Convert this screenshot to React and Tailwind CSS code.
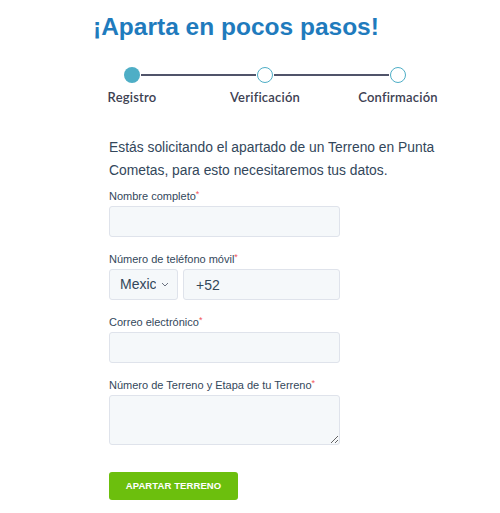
import React from "react";

const steps = ["Registro", "Verificación", "Confirmación"];

function Field({ label, children }) {
  return (
    <div className="mb-[15px]">
      <label className="block text-[11px] leading-[14px] text-[#33475b] mb-[3px]">
        {label}
        <span className="text-[#f2545b] text-[9px] align-top leading-[10px]">*</span>
      </label>
      {children}
    </div>
  );
}

const boxCls =
  "block h-[31px] rounded-[3px] border border-[#dfe3eb] bg-[#f5f8fa] text-[14px] text-[#33475b] outline-none";

export default function App() {
  return (
    <div
      className="w-[500px] h-[513px] bg-white overflow-hidden"
      style={{ fontFamily: '"Liberation Sans", Arial, sans-serif' }}
    >
      <div className="pl-[93px] pt-[12px]">
        <h1 className="text-[24.5px] leading-[30px] font-bold text-[#1f7bbd]">
          ¡Aparta en pocos pasos!
        </h1>

        {/* stepper */}
        <div className="mt-[25px] w-[282px] ml-[31px]">
          <div className="flex items-center">
            <span className="w-[16px] h-[16px] rounded-full bg-[#4eaec6] shrink-0" />
            <span className="flex-1 h-[2px] bg-[#50546a] mx-[1px]" />
            <span className="w-[16px] h-[16px] rounded-full border-[1.5px] border-[#4eaec6] bg-white shrink-0" />
            <span className="flex-1 h-[2px] bg-[#50546a] mx-[1px]" />
            <span className="w-[16px] h-[16px] rounded-full border-[1.5px] border-[#4eaec6] bg-white shrink-0" />
          </div>
          <div
            className="flex justify-between mt-[6px] text-[13px] leading-[16px] font-semibold text-[#3d4152] tracking-[0.2px]"
            style={{ fontFamily: "Lato, sans-serif" }}
          >
            {steps.map((s) => (
              <div key={s} className="w-[16px] flex justify-center whitespace-nowrap">
                {s}
              </div>
            ))}
          </div>
        </div>
      </div>

      <div className="pl-[109px] pt-[31px]">
        <p className="text-[13.85px] leading-[23px] text-[#33475b] w-[345px] mb-[7px]">
          Estás solicitando el apartado de un Terreno en Punta Cometas, para esto necesitaremos tus datos.
        </p>

        <Field label="Nombre completo">
          <input className={`${boxCls} w-[231px] px-[10px]`} />
        </Field>

        <Field label="Número de teléfono móvil">
          <div className="flex gap-[5px]">
            <div className={`${boxCls} w-[69px] flex items-center pl-[10px] pr-[5px]`}>
              <span className="w-[36px] overflow-hidden whitespace-nowrap">Mexico</span>
              <svg width="8" height="5" viewBox="0 0 8 5" className="ml-auto mr-[3px]">
                <path d="M1 1l3 3 3-3" fill="none" stroke="#6b7280" strokeWidth="1" />
              </svg>
            </div>
            <input className={`${boxCls} w-[157px] px-[12px]`} defaultValue="+52" />
          </div>
        </Field>

        <Field label="Correo electrónico">
          <input className={`${boxCls} w-[231px] px-[10px]`} />
        </Field>

        <Field label="Número de Terreno y Etapa de tu Terreno">
          <textarea className="block w-[231px] h-[50px] rounded-[3px] border border-[#dfe3eb] bg-[#f5f8fa] px-[10px] text-[14px] outline-none" />
        </Field>

        <button className="mt-[12px] w-[129px] h-[28px] rounded-[3px] bg-[#6cbf0d] text-white text-[9.5px] font-bold tracking-[0.1px]">
          APARTAR TERRENO
        </button>
      </div>
    </div>
  );
}
